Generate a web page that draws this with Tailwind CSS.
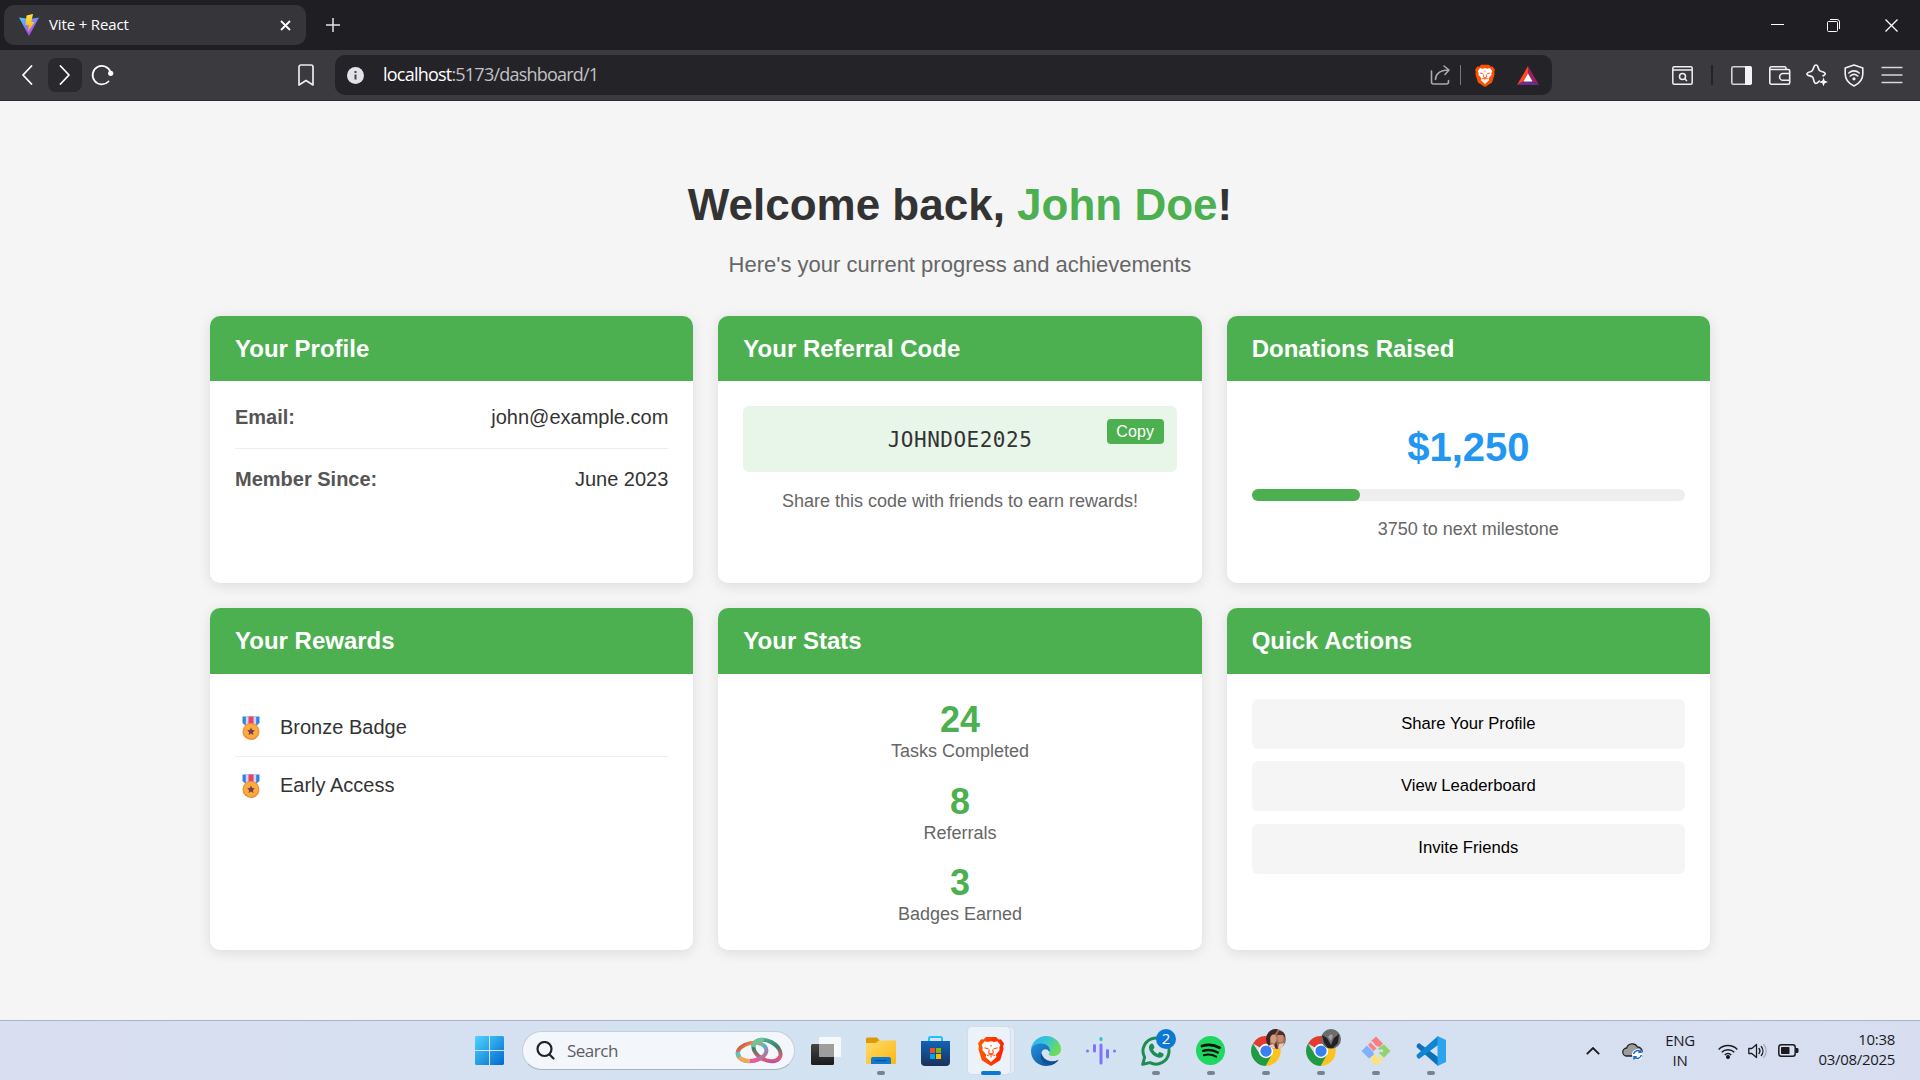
<!DOCTYPE html>
<html lang="en">
<head>
<meta charset="utf-8">
<title>Vite + React</title>
<script src="https://cdn.jsdelivr.net/npm/@tailwindcss/browser@4"></script>
</head>
<body class="w-[1920px] h-[1080px] overflow-hidden flex flex-col bg-[#f5f5f5] font-['Liberation_Sans',Arial,sans-serif]">

<!-- shared symbols -->
<svg class="absolute w-0 h-0">
  <defs>
    <linearGradient id="viteA" x1="0" y1="0" x2=".6" y2="1"><stop offset="0" stop-color="#41d1ff"/><stop offset="1" stop-color="#bd34fe"/></linearGradient>
    <linearGradient id="viteB" x1="0" y1="0" x2="0" y2="1"><stop offset="0" stop-color="#ffea83"/><stop offset=".1" stop-color="#ffdd35"/><stop offset="1" stop-color="#ffa800"/></linearGradient>
    <linearGradient id="win" gradientUnits="userSpaceOnUse" x1="0" y1="0" x2="29" y2="29"><stop offset="0" stop-color="#4fd4ff"/><stop offset="1" stop-color="#0069cf"/></linearGradient>
    <linearGradient id="folder" x1="0" y1="0" x2="1" y2="1"><stop offset="0" stop-color="#ffdc6b"/><stop offset="1" stop-color="#fbb70f"/></linearGradient>
    <linearGradient id="store" x1="0" y1="0" x2="0" y2="1"><stop offset="0" stop-color="#0f63b8"/><stop offset="1" stop-color="#1c3158"/></linearGradient>
    <linearGradient id="brave" x1="0" y1="0" x2="1" y2="0"><stop offset="0" stop-color="#ff5a00"/><stop offset="1" stop-color="#ff2000"/></linearGradient>
    <linearGradient id="edgeA" x1="0" y1="0" x2="1" y2=".4"><stop offset="0" stop-color="#2fb3ee"/><stop offset=".5" stop-color="#35c3dc"/><stop offset="1" stop-color="#6bdd5a"/></linearGradient>
    <linearGradient id="edgeB" x1="0" y1="0" x2="1" y2="1"><stop offset="0" stop-color="#1f93e0"/><stop offset="1" stop-color="#114a8b"/></linearGradient>
    <linearGradient id="dark" x1="0" y1="0" x2="0" y2="1"><stop offset="0" stop-color="#444"/><stop offset="1" stop-color="#1b1b1b"/></linearGradient>
    <linearGradient id="ringA" x1="0" y1="0" x2="1" y2="1"><stop offset="0" stop-color="#b5433a"/><stop offset=".35" stop-color="#f09a5a"/><stop offset=".6" stop-color="#4fb7c9"/><stop offset="1" stop-color="#e94f8b"/></linearGradient>
    <linearGradient id="ringB" x1="0" y1="0" x2="1" y2="1"><stop offset="0" stop-color="#55c0a0"/><stop offset=".4" stop-color="#3f7f6a"/><stop offset=".75" stop-color="#e8596b"/><stop offset="1" stop-color="#8a4fd0"/></linearGradient>
    <symbol id="lion" viewBox="0 0 26 30">
      <path d="M8 1h10l2.6 2.6 2.3-.3L26 7.4l-1 3 .6 2.6-3.4 11.2L13 30 3.800 24.200.4 13l.6-2.600-1-3 3.100-4.100 2.300.3z"/>
      <path fill="#fff" d="M13 5.200l3.200.9 3.200-.8 3 3.800-1.200 2.600.5 2.200-4 4.800.8 2.400-2 1.600-3.500 3.400-3.500-3.400-2-1.600.8-2.400-4-4.800.5-2.200L3.600 9.100l3-3.800 3.200.8z"/>
      <path fill="none" stroke="#ff4a10" stroke-width="1.100" d="M6.500 11.700l4 1.300M19.500 11.700l-4 1.300M13 9v1.500M11.300 13.500l-.6 3.500 2.300 1 2.300-1-.6-3.500M9 19.500l4-1.200 4 1.200M13 18.500v3"/>
    </symbol>
    <symbol id="chrome" viewBox="0 0 48 48">
      <path fill="#e33b2e" d="M24 24L3.200 12A24 24 0 0 1 44.800 12L44.800 13H24z"/>
      <path fill="#fcc31e" d="M24 13H44.900A24 24 0 0 1 23.500 48L33.500 29.500z"/>
      <path fill="#219a45" d="M3.200 12A24 24 0 0 0 23.500 48L33.600 29.500 14.500 29.500z"/>
      <circle cx="24" cy="24" r="11.500" fill="#fff"/><circle cx="24" cy="24" r="9" fill="#3a7ff0"/>
    </symbol>
    <symbol id="medal" viewBox="0 0 18 24">
      <path fill="#2f82e0" d="M.5.5h17v6.500L14 10H4L.5 7z"/><path fill="#c9d6f5" d="M3.800.5h10.400V9H3.800z"/><path fill="#ef3f63" d="M6.500.5h5V9h-5z"/>
      <circle cx="9" cy="15.500" r="8.500" fill="#f08f3c"/><circle cx="9" cy="15.200" r="7.200" fill="#fbab3c"/>
      <path fill="#7a3b55" d="M9 11.500l1.200 2.400 2.600.4-1.900 1.900.5 2.700L9 17.600l-2.400 1.300.5-2.700-1.900-1.900 2.600-.4z"/>
    </symbol>
  </defs>
</svg>

<!-- tab strip -->
<header class="h-[50px] shrink-0 bg-[#1f1e23] flex items-center pl-1 text-white">
  <div class="w-[302px] h-10 rounded-[10px] bg-[#36353a] flex items-center pl-[15px] pr-[15px]">
    <svg class="w-5 h-[22px]" viewBox="0 0 20 22"><path fill="url(#viteA)" d="M0 3.500L10 22 20 3.500 11 5z"/><path fill="url(#viteB)" d="M14 0L7.500 1.500 6.500 11h3.200L9 18 15.500 8h-3.200z"/></svg>
    <span class="ml-[10px] -mt-[2px] text-[15px] font-['Open_Sans',sans-serif] tracking-[-0.15px]">Vite + React</span>
    <svg class="ml-auto w-[11px] h-[11px]" viewBox="0 0 11 11" stroke="#fff" stroke-width="1.800"><path d="M1 1l9 9M10 1l-9 9"/></svg>
  </div>
  <svg class="ml-5 w-[14px] h-[14px]" viewBox="0 0 14 14" stroke="#e4e4e6" stroke-width="1.500"><path d="M7 0v14M0 7h14"/></svg>
  <div class="ml-auto flex items-center gap-[43px] pr-[22px]">
    <svg class="w-[13px] h-[13px]" viewBox="0 0 13 13"><path fill="#fff" d="M0 5h13v1H0z"/></svg>
    <svg class="w-[13px] h-[13px]" viewBox="0 0 13 13" fill="none" stroke="#fff"><rect x=".5" y="2.500" width="10" height="10" rx="1"/><path d="M3 .5h7a2.500 2.500 0 0 1 2.500 2.500v7"/></svg>
    <svg class="w-[13px] h-[13px] ml-[2px]" viewBox="0 0 13 13" stroke="#fff" stroke-width="1.300"><path d="M.5.5l12 12M12.500.5l-12 12"/></svg>
  </div>
</header>

<!-- toolbar -->
<nav class="h-[51px] shrink-0 bg-[#3b3a3f] border-b border-[#2c2b30] flex items-center text-white">
  <svg class="ml-[21px] w-3 h-5" viewBox="0 0 12 20" fill="none" stroke="#fff" stroke-width="1.800" stroke-linecap="round" stroke-linejoin="round"><path d="M10.500 1L2 10l8.500 9"/></svg>
  <div class="ml-[15px] w-[34px] h-[34px] rounded-lg bg-[#2a292d] flex items-center justify-center">
    <svg class="w-3 h-5" viewBox="0 0 12 20" fill="none" stroke="#fff" stroke-width="1.800" stroke-linecap="round" stroke-linejoin="round"><path d="M1.500 1L10 10l-8.500 9"/></svg>
  </div>
  <svg class="ml-[9px] w-[23px] h-[22px]" viewBox="0 0 23 22"><path fill="none" stroke="#fff" stroke-width="1.800" stroke-linecap="round" d="M17.500 17.500A9.200 9.200 0 1 1 19.500 8"/><circle cx="19.700" cy="9.300" r="2.600" fill="#fff"/></svg>
  <svg class="ml-[184px] w-4 h-[22px]" viewBox="0 0 16 22" fill="none" stroke="#ececee" stroke-width="1.700" stroke-linejoin="round"><path d="M1 3a2 2 0 0 1 2-2h10a2 2 0 0 1 2 2v18l-7-4.500L1 21z"/></svg>
  <div class="ml-[21px] w-[1217px] h-10 rounded-[10px] bg-[#242328] flex items-center pl-3 pr-[13px]">
    <svg class="w-[17px] h-[17px]" viewBox="0 0 17 17"><circle cx="8.500" cy="8.500" r="8.500" fill="#e4e2e9"/><path stroke="#444" stroke-width="2" d="M8.500 7.500v5M8.500 4v2"/></svg>
    <span class="ml-[19px] -mt-[2px] text-[18px] font-['Open_Sans',sans-serif] tracking-[-0.780px] whitespace-nowrap">localhost<span class="text-[#c2c1c6]">:5173/dashboard/1</span></span>
    <svg class="ml-auto w-[21px] h-[20px]" viewBox="0 0 21 20" fill="none" stroke="#aaa9ae" stroke-width="1.600" stroke-linecap="round" stroke-linejoin="round"><path d="M1.500 6v11a2 2 0 0 0 2 2h13a2 2 0 0 0 2-2v-1.500M5.500 14.500c0-5 4-9.500 13-9.500M14 1l5 4-4 4.500"/></svg>
    <div class="ml-[9px] w-px h-5 bg-[#77767b]"></div>
    <svg class="ml-[14px] w-5 h-[23px]" fill="#ff5000"><use href="#lion"/></svg>
    <svg class="ml-[22px] w-[22px] h-[19px]" viewBox="0 0 22 19"><path fill="#ff4724" d="M11 0v8L7 15l-7 4z"/><path fill="#9e1f63" d="M11 0l11 19-7-4-4-7z"/><path fill="#662d91" d="M0 19l7-4h8l7 4z"/><path fill="#fff" d="M11 7.500l4.500 8h-9z"/></svg>
  </div>
  <div class="ml-auto flex items-center pr-[17px]">
    <svg class="w-[21px] h-[19px]" viewBox="0 0 21 19" fill="none" stroke="#f0f0f2" stroke-width="1.500"><rect x=".8" y=".8" width="19.400" height="17.400" rx="1.500"/><path d="M1 4h19"/><circle cx="10.500" cy="10.500" r="3"/><path d="M12.700 12.700l2.300 2.300"/></svg>
    <div class="ml-[18px] w-[2px] h-5 bg-[#242328]"></div>
    <svg class="ml-[18px] w-[21px] h-[19px]" viewBox="0 0 21 19"><rect x=".8" y=".8" width="19.400" height="17.400" rx="1.500" fill="none" stroke="#d4d4d6" stroke-width="1.600"/><path fill="#f4f4f6" d="M14 0h5.500L21 1.500v16L19.500 19H14z"/></svg>
    <svg class="ml-[17px] w-[22px] h-[19px]" viewBox="0 0 22 19" fill="none" stroke="#f0f0f2" stroke-width="1.600"><path d="M17 3.500V2.300A1.500 1.500 0 0 0 15.500.8H2.300A1.500 1.500 0 0 0 .8 2.300v14.400A1.500 1.500 0 0 0 2.300 18.200h16.900a1.500 1.500 0 0 0 1.500-1.500V5A1.500 1.500 0 0 0 19.200 3.500H1"/><path d="M21 7.500h-7a3.400 3.400 0 0 0 0 6.800h7"/></svg>
    <svg class="ml-[15px] w-[22px] h-[22px]" viewBox="0 0 22 22"><path fill="none" stroke="#f0f0f2" stroke-width="1.700" stroke-linejoin="round" d="M14 17c-1.500-.3-2 2.500-4 2.500-2.800 0-1.700-5-3.600-6.600C4.700 11.500.9 12 .9 10s4-1.700 5.500-3.500C8 4.700 7.400 1 10 1s1.800 3.900 3.500 5.500c1.600 1.600 5.700 1 5.700 3.300 0 1.500-1.700 1.800-2.700 2.400"/><path fill="#fff" d="M17.500 13.500l1.200 3.300 3.300 1.200-3.300 1.200-1.200 3-1.200-3L13 18l3.300-1.200z"/></svg>
    <svg class="ml-4 w-[20px] h-[23px]" viewBox="0 0 20 23" fill="none" stroke="#f0f0f2" stroke-width="1.600" stroke-linecap="round"><path stroke-linejoin="round" d="M10 1l8.800 3v6c0 6-3.500 9.500-8.800 12C4.700 19.500 1.200 16 1.200 10V4z"/><path d="M4.800 9c3-2.800 7.400-2.800 10.400 0M6.200 12c2.200-1.900 5.400-1.900 7.600 0"/><circle cx="10" cy="14.800" r=".8" fill="#fff"/></svg>
    <svg class="ml-[17px] w-[22px] h-[18px]" viewBox="0 0 22 18" stroke="#d8d8da" stroke-width="1.600"><path d="M.5 1.500h21M.5 9h21M.5 16.500h21"/></svg>
  </div>
</nav>

<!-- dashboard -->
<main class="grow min-h-0 flex flex-col items-center text-[#333]">
  <h1 class="mt-[78px] h-[52px] leading-[52px] text-[44px] font-bold whitespace-nowrap">Welcome back, <span class="text-[#4caf50]">John Doe</span>!</h1>
  <p class="mt-[20px] h-7 leading-7 text-[22px] text-[#666]">Here's your current progress and achievements</p>

  <div class="mt-[37px] w-[1500px] grid grid-cols-3 grid-rows-[267px_342px] gap-[25px]">
    <section class="rounded-[10px] overflow-hidden bg-white shadow-[0_2.500px_12.500px_rgba(0,0,0,0.1)]">
      <h2 class="h-[65px] px-[25px] bg-[#4caf50] text-white text-2xl leading-[65px] font-bold">Your Profile</h2>
      <div class="px-[25px] pt-[25px] text-[20px] leading-[23px]">
        <div class="flex justify-between pb-[19px] border-b border-[#eee]"><strong class="text-[#555]">Email:</strong><span>john@example.com</span></div>
        <div class="flex justify-between pt-[19px]"><strong class="text-[#555]">Member Since:</strong><span>June 2023</span></div>
      </div>
    </section>

    <section class="rounded-[10px] overflow-hidden bg-white shadow-[0_2.500px_12.500px_rgba(0,0,0,0.1)]">
      <h2 class="h-[65px] px-[25px] bg-[#4caf50] text-white text-2xl leading-[65px] font-bold">Your Referral Code</h2>
      <div class="px-[25px] pt-[25px] text-center">
        <div class="relative h-[66px] rounded-[6px] bg-[#e8f5e9] text-[21px] leading-[68px] tracking-[0.5px] font-['DejaVu_Sans_Mono',monospace]">JOHNDOE2025
          <button class="absolute top-[13px] right-[13px] w-[57px] h-[25px] rounded bg-[#4caf50] text-white text-[16px] leading-[25px] tracking-[0.1px] font-['Liberation_Sans',sans-serif]">Copy</button>
        </div>
        <p class="mt-[19px] text-[18px] leading-[21px] text-[#666]">Share this code with friends to earn rewards!</p>
      </div>
    </section>

    <section class="rounded-[10px] overflow-hidden bg-white shadow-[0_2.500px_12.500px_rgba(0,0,0,0.1)]">
      <h2 class="h-[65px] px-[25px] bg-[#4caf50] text-white text-2xl leading-[65px] font-bold">Donations Raised</h2>
      <div class="px-[25px] pt-[43px] text-center">
        <div class="text-[40px] leading-[46px] font-bold text-[#2196f3]">$1,250</div>
        <div class="mt-[19px] h-3 rounded-full bg-[#eee]"><div class="h-3 rounded-full bg-[#4caf50]" style="width:25%"></div></div>
        <p class="mt-[18px] text-[18px] leading-[21px] text-[#666]">3750 to next milestone</p>
      </div>
    </section>

    <section class="rounded-[10px] overflow-hidden bg-white shadow-[0_2.500px_12.500px_rgba(0,0,0,0.1)]">
      <h2 class="h-[66px] px-[25px] bg-[#4caf50] text-white text-2xl leading-[65px] font-bold">Your Rewards</h2>
      <ul class="px-[25px] pt-[25px] text-[20px]">
        <li class="h-[58px] flex items-center pl-[7px] border-b border-[#eee]"><svg class="w-[18px] h-6"><use href="#medal"/></svg><span class="ml-[20px] pb-[2px]">Bronze Badge</span></li>
        <li class="h-[58px] flex items-center pl-[7px]"><svg class="w-[18px] h-6"><use href="#medal"/></svg><span class="ml-[20px] pb-[2px]">Early Access</span></li>
      </ul>
    </section>

    <section class="rounded-[10px] overflow-hidden bg-white shadow-[0_2.500px_12.500px_rgba(0,0,0,0.1)]">
      <h2 class="h-[66px] px-[25px] bg-[#4caf50] text-white text-2xl leading-[65px] font-bold">Your Stats</h2>
      <div class="pt-[25px] flex flex-col gap-[17.600px] text-center text-[18px] leading-[23px] text-[#666]">
        <div><div class="text-[36px] leading-[41px] font-bold text-[#4caf50]">24</div>Tasks Completed</div>
        <div><div class="text-[36px] leading-[41px] font-bold text-[#4caf50]">8</div>Referrals</div>
        <div><div class="text-[36px] leading-[41px] font-bold text-[#4caf50]">3</div>Badges Earned</div>
      </div>
    </section>

    <section class="rounded-[10px] overflow-hidden bg-white shadow-[0_2.500px_12.500px_rgba(0,0,0,0.1)]">
      <h2 class="h-[66px] px-[25px] bg-[#4caf50] text-white text-2xl leading-[65px] font-bold">Quick Actions</h2>
      <div class="px-[25px] pt-[25px] flex flex-col gap-[12.300px] text-[16.670px] text-black">
        <button class="h-[50px] pb-[2px] rounded-[6px] bg-[#f5f5f5]">Share Your Profile</button>
        <button class="h-[50px] pb-[2px] rounded-[6px] bg-[#f5f5f5]">View Leaderboard</button>
        <button class="h-[50px] pb-[2px] rounded-[6px] bg-[#f5f5f5]">Invite Friends</button>
      </div>
    </section>
  </div>
</main>

<!-- taskbar -->
<footer class="h-[60px] shrink-0 border-t border-[#a9b4c4] bg-linear-to-r from-[#d9def0] via-[#d2e3f1] to-[#d8def0] flex items-center text-[#1b1b1f] font-['Open_Sans',sans-serif]">
  <svg class="ml-[475px] w-[29px] h-[29px]" viewBox="0 0 29 29" fill="url(#win)"><path d="M1 0h13v14H0V1zM15 0h13l1 1v13H15zM0 15h14v14H1l-1-1zM15 15h14v13l-1 1H15z"/></svg>
  <div class="ml-[18px] w-[273px] h-[39px] rounded-full bg-[#f3f6fb] border border-[#c3cedd] border-b-[#a5b2c4] flex items-center pl-[13px] pr-[10px]">
    <svg class="w-[19px] h-[19px]" viewBox="0 0 19 19" fill="none" stroke="#222" stroke-width="2.200" stroke-linecap="round"><circle cx="8.500" cy="8" r="7"/><path d="M13.500 13.500l4 4"/></svg>
    <span class="ml-[12px] text-[17px] tracking-[-0.5px] text-[#5c5e63]">Search</span>
    <svg class="ml-auto w-[49px] h-[28px]" viewBox="0 0 49 28" fill="none" stroke-width="4"><ellipse cx="32" cy="13.500" rx="14.500" ry="9.500" stroke="url(#ringB)" transform="rotate(28 32 13.500)"/><ellipse cx="17" cy="15" rx="14.500" ry="9" stroke="url(#ringA)" transform="rotate(-10 17 15)"/><path d="M18 10c1-5 6-8 11-7" stroke="#6cc49b"/><path d="M4 20c3 3 7 4 11 4" stroke="#f3a75b"/><path d="M15 24c3 0 6-.5 9-2" stroke="#f2569a"/><path d="M3 15c0 2 0 3 1.500 5" stroke="#58c7c0"/></svg>
  </div>

  <div class="ml-[3px] flex h-full items-center">
    <div class="w-[55px] h-full flex items-center justify-center"><svg class="w-[30px] h-[28px]" viewBox="0 0 30 28"><rect y="7" width="23" height="21" rx="1.500" fill="url(#dark)"/><rect x="8" width="22" height="20" rx="1" fill="#fff" fill-opacity=".8"/><path fill="#8b8b8b" fill-opacity=".75" d="M8 7h15v13H8z"/></svg></div>
    <div class="relative w-[55px] h-full flex items-center justify-center"><svg class="w-[30px] h-[27px]" viewBox="0 0 30 27"><path fill="#dd9a08" d="M0 2a1.500 1.500 0 0 1 1.500-1.500H11L14 4v4H0z"/><path fill="url(#folder)" d="M0 6h9.500L13 3.500h17V26a1 1 0 0 1-1 1H1a1 1 0 0 1-1-1z"/><path fill="#0f78cf" d="M5 27v-5a2 2 0 0 1 2-2h16a2 2 0 0 1 2 2v5z"/><path fill="#0a4f94" d="M9 23h12v1.200H9z"/></svg><i class="absolute bottom-[5px] w-2 h-1 rounded-full bg-[#7b828c]"></i></div>
    <div class="w-[55px] h-full flex items-center justify-center"><svg class="w-[29px] h-[30px]" viewBox="0 0 29 30"><path fill="none" stroke="#27c0f5" stroke-width="2" d="M8 6V2.500A1.500 1.500 0 0 1 9.500 1h10A1.500 1.500 0 0 1 21 2.500V6"/><path fill="url(#store)" d="M0 5h29v21a4 4 0 0 1-4 4H4a4 4 0 0 1-4-4z"/><path fill="#f25022" d="M9 12h5v5H9z"/><path fill="#7fba00" d="M15 12h5v5h-5z"/><path fill="#00a4ef" d="M9 18h5v5H9z"/><path fill="#ffb900" d="M15 18h5v5h-5z"/></svg></div>
    <div class="relative w-[55px] h-full flex items-center justify-center">
      <i class="absolute left-[9px] top-[5px] w-[43px] h-[49px] rounded-[5px] bg-[#e3ebf5] border border-[#d0dae6]"></i>
      <i class="absolute left-[4px] top-[5px] w-[44px] h-[49px] rounded-[5px] bg-[#ebf2f9] border border-[#d3dce8]"></i>
      <svg class="relative w-[26px] h-[30px]" fill="url(#brave)"><use href="#lion"/></svg><i class="absolute bottom-[5px] w-5 h-1 rounded-full bg-[#0a78d4]"></i>
    </div>
    <div class="w-[55px] h-full flex items-center justify-center"><svg class="w-[30px] h-[30px]" viewBox="0 0 30 30"><path fill="url(#edgeA)" d="M0 13.500C1 5.500 7.500 0 15 0c8.500 0 15 6.500 15 13 0 4.500-3.500 7-7.500 7-3 0-4.800-.8-4.800-1.800 0-.7 1.300-1.200 1.300-3.700 0-3-3-6-8-6-6 0-10 3-11 5z"/><path fill="url(#edgeB)" d="M0 15C0 10 5 7.500 10 7.500c5.500 0 9 3.500 9 7l-.6 1.800c-.5-1.500-1.600-3-4-3-2.700 0-4.500 2.800-3.900 6 .8 4 5.500 6.500 10 6.500 3 0 5-1.100 7-2C25.500 27.500 20.500 30 15 30 7 30 0 23.500 0 15z"/><path fill="#124f96" d="M10.500 17c-3 7 3.500 12.500 10 11.500 3-.6 5.300-2.500 7-4.600-6 3-15 1.300-17-6.900z"/></svg></div>
    <div class="w-[55px] h-full flex items-center justify-center"><svg class="w-[30px] h-[28px]" viewBox="0 0 30 28" stroke="#7c74fb" stroke-width="3" stroke-linecap="round"><path d="M1.500 14v.01M8.500 8.500v5.500M15 8v18M21.500 13.500v6.500M28.500 14v.01"/><path stroke="#27c4c9" d="M15 1.500v1"/></svg></div>
    <div class="relative w-[55px] h-full flex items-center justify-center"><svg class="w-[30px] h-[30px]" viewBox="0 0 30 30"><path fill="none" stroke="#1d8d52" stroke-width="3" stroke-linejoin="round" d="M1.700 28.300l1.900-7A13 13 0 1 1 9 26.600z"/><path fill="#1d8d52" d="M10.500 7.500c.7-.2 1.400 0 1.700.7l1.200 2.800c.2.500 0 1-.4 1.400l-1 1.200c1 2 2.500 3.500 4.700 4.400l1.300-1.500c.4-.5.9-.6 1.400-.3l2.700 1.400c.5.300.7.700.5 1.400-.5 2-2.400 3-4.300 2.700C13 21 8.500 16.500 8 12c-.2-1.800.9-4 2.500-4.500z"/></svg>
      <span class="absolute left-[28px] top-[8px] w-5 h-5 rounded-full bg-[#0a78d4] text-white text-[15px] leading-[19px] text-center">2</span><i class="absolute bottom-[5px] w-2 h-1 rounded-full bg-[#7b828c]"></i></div>
    <div class="relative w-[55px] h-full flex items-center justify-center"><svg class="w-[29px] h-[29px]" viewBox="0 0 29 29"><circle cx="14.500" cy="14.500" r="14.500" fill="#1fd761"/><g fill="none" stroke="#0b120d" stroke-linecap="round"><path stroke-width="2.800" d="M6 10c6-1.700 12.500-1.100 17.500 1.800"/><path stroke-width="2.300" d="M7 14.800c5-1.400 10.500-.8 14.800 1.700"/><path stroke-width="2" d="M7.800 19.200c4.200-1.100 8.700-.6 12.300 1.500"/></g></svg><i class="absolute bottom-[5px] w-2 h-1 rounded-full bg-[#7b828c]"></i></div>
    <div class="relative w-[55px] h-full flex items-center justify-center"><svg class="w-[30px] h-[30px]"><use href="#chrome"/></svg>
      <svg class="absolute left-[28px] top-[8px] w-5 h-5 rounded-full" viewBox="0 0 20 20"><path fill="#9b6b55" d="M0 0h20v20H0z"/><path fill="#3c2621" d="M0 0h12L9 5 4 8v8L0 18z"/><ellipse cx="7.500" cy="10" rx="3" ry="4.500" fill="#d39a80"/><ellipse cx="14.500" cy="9" rx="3" ry="4.500" fill="#c58a70"/><path fill="#4b2f2a" d="M11 6l2-4 6 1v6l-2-3zM10 12l2 8H8z"/><path fill="#e8c9bb" d="M2 17l5-2 3 5H2zM13 15l5-1-2 6h-4z"/></svg><i class="absolute bottom-[5px] w-2 h-1 rounded-full bg-[#7b828c]"></i></div>
    <div class="relative w-[55px] h-full flex items-center justify-center"><svg class="w-[30px] h-[30px]"><use href="#chrome"/></svg>
      <svg class="absolute left-[28px] top-[8px] w-5 h-5 rounded-full" viewBox="0 0 20 20"><path fill="#6c6c6c" d="M0 0h20v20H0z"/><path fill="#222" d="M1 6l5 3 4 7 3-7 5-4-1 9-5 5H7l-4-5z"/><path fill="#a0a0a0" d="M7 8l3 4 2-5-2-2z"/></svg><i class="absolute bottom-[5px] w-2 h-1 rounded-full bg-[#7b828c]"></i></div>
    <div class="relative w-[55px] h-full flex items-center justify-center"><svg class="w-[30px] h-[30px]" viewBox="0 0 30 30"><path fill="#fa8080" d="M15 .5L22 7.500 19 11l-4-1-3-4-2-1z"/><path fill="#fa8080" d="M9.500 6.500l6 6-3 2.500L7 9z"/><path fill="#80b0ff" d="M6 9.500l6 6 1 3-5 4L.5 15z"/><path fill="#8fd36b" d="M23 8.500l6.500 6.500-6.500 6.500-5-4.500 1-1.500 2 1 1.500-2-2-1.500-2 1-1.500-1.500z"/><path fill="#ffe36e" d="M9 23l5-5 1.500 1v4l1.500 1 1.500-2-1-2 .5-1 4.500 4L15 29.500z"/></svg><i class="absolute bottom-[5px] w-2 h-1 rounded-full bg-[#7b828c]"></i></div>
    <div class="relative w-[55px] h-full flex items-center justify-center"><svg class="w-[30px] h-[30px]" viewBox="0 0 30 30"><path fill="#0f6fb8" d="M1 8.500l2-1.500L22 21v9L.5 11z"/><path fill="#0f86d3" d="M1 21.500l2 1.500L22 9V0L.5 19z"/><path fill="#2ba4f0" d="M21.500 0L30 4v22l-8.500 4z"/></svg><i class="absolute bottom-[5px] w-2 h-1 rounded-full bg-[#7b828c]"></i></div>
  </div>

  <div class="ml-auto flex items-center pr-[25px]">
    <svg class="w-[14px] h-[8px]" viewBox="0 0 14 8" fill="none" stroke="#1b1b1f" stroke-width="1.800"><path d="M.8 7.200L7 1l6.200 6.200"/></svg>
    <svg class="ml-[22px] w-[22px] h-[18px]" viewBox="0 0 22 18"><path fill="#9c9c9c" stroke="#222" stroke-width="1.300" d="M5 14A4 4 0 0 1 4.600 6 6 6 0 0 1 15.500 5a4.700 4.700 0 0 1 4.700 5.500V14z"/><circle cx="15.500" cy="12.500" r="5.500" fill="#fff"/><path fill="none" stroke="#1b6fc4" stroke-width="1.500" d="M11.700 12a4 4 0 0 1 7-2M19.300 13a4 4 0 0 1-7 2M19 7.500V10.300h-2.700M12 17.500V14.800h2.700"/></svg>
    <div class="ml-[20px] w-[32px] pb-[2px] text-[15px] leading-[20px] text-center tracking-[-0.3px]">ENG<br>IN</div>
    <svg class="ml-[22px] w-[20px] h-[16px]" viewBox="0 0 20 16" fill="none" stroke="#1b1b1f" stroke-width="1.500"><path d="M.7 6.500a13 13 0 0 1 18.600 0M3.700 9.200a9 9 0 0 1 12.600 0M6.700 12a5 5 0 0 1 6.600 0"/><circle cx="10" cy="14" r="1.300" fill="#1b1b1f"/></svg>
    <svg class="ml-[10px] w-[20px] h-[16px]" viewBox="0 0 20 16" fill="none" stroke="#1b1b1f" stroke-width="1.300" stroke-linecap="round"><path stroke-linejoin="round" d="M.8 5.500h3L8.500 1.500v13L3.800 10.500h-3z"/><path d="M11 5.500a4 4 0 0 1 0 5M13.300 3.500a7 7 0 0 1 0 9"/><path stroke="#a9adb8" d="M15.800 1.500a10 10 0 0 1 0 13"/></svg>
    <svg class="ml-[10px] w-[21px] h-[13px]" viewBox="0 0 21 13"><rect x=".8" y=".8" width="16.400" height="11.400" rx="2.500" fill="none" stroke="#1b1b1f" stroke-width="1.500"/><rect x="3" y="3" width="8.500" height="7" rx=".8" fill="#1b1b1f"/><path fill="#1b1b1f" d="M18 4h1.500a1.500 1.500 0 0 1 1 1.400v2.200a1.500 1.500 0 0 1-1 1.400H18z"/></svg>
    <div class="ml-[18px] w-[78px] pb-1 text-[15px] leading-[20px] text-right tracking-[-0.3px] whitespace-nowrap">10:38<br>03/08/2025</div>
  </div>
</footer>
</body>
</html>
